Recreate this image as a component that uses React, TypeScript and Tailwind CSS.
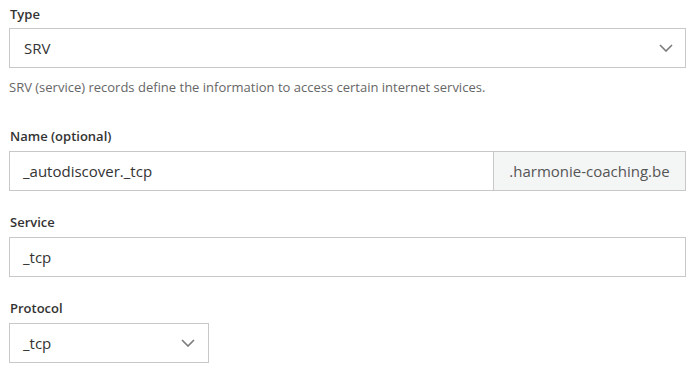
import React from "react";

function Chevron() {
  return (
    <svg width="14" height="8" viewBox="0 0 14 8" fill="none" className="shrink-0">
      <path d="M1 1l6 6 6-6" stroke="#7a7a7a" strokeWidth="1.6" />
    </svg>
  );
}

export default function App() {
  return (
    <div
      className="w-[697px] h-[373px] bg-white pl-[9px] pt-[4px] text-[#333]"
      style={{ fontFamily: '"Open Sans", "Noto Sans", sans-serif' }}
    >
      <div className="w-[677px]">
        <label className="block pl-px text-[13px] leading-[20px] font-semibold mb-[4px]">Type</label>
        <div className="h-[40px] border border-[#c8c8c8] flex items-center justify-between pl-[14px] pr-[12px] text-[15px]">
          <span>SRV</span>
          <Chevron />
        </div>
        <p className="mt-[10px] text-[13px] leading-[18px] text-[#666]">
          SRV (service) records define the information to access certain internet services.
        </p>

        <label className="block pl-px mt-[30px] text-[13px] leading-[20px] font-semibold mb-[5px]">Name (optional)</label>
        <div className="h-[40px] flex">
          <div className="flex-1 border border-[#c8c8c8] flex items-center pl-[13px] text-[15px]">
            _autodiscover._tcp
          </div>
          <div className="w-[192px] border border-l-0 border-[#c8c8c8] bg-[#f4f5f5] flex items-center justify-center text-[15px] text-[#555]">
            .harmonie-coaching.be
          </div>
        </div>

        <label className="block pl-px mt-[21px] text-[13px] leading-[20px] font-semibold mb-[5px]">Service</label>
        <div className="h-[40px] border border-[#c8c8c8] flex items-center pl-[13px] text-[15px]">_tcp</div>

        <label className="block pl-px mt-[21px] text-[13px] leading-[20px] font-semibold mb-[5px]">Protocol</label>
        <div className="w-[200px] h-[40px] border border-[#c8c8c8] flex items-center justify-between pl-[13px] pr-[13px] text-[15px]">
          <span>_tcp</span>
          <Chevron />
        </div>
      </div>
    </div>
  );
}
